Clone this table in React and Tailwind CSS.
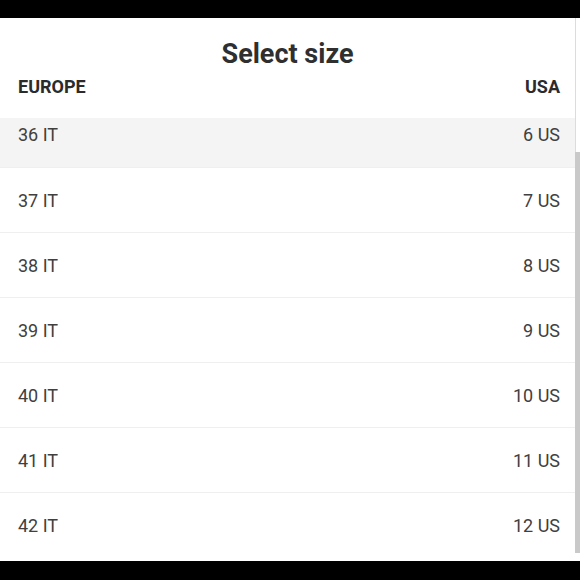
import React from 'react';

const sizes = [
  ['36 IT', '6 US'],
  ['37 IT', '7 US'],
  ['38 IT', '8 US'],
  ['39 IT', '9 US'],
  ['40 IT', '10 US'],
  ['41 IT', '11 US'],
  ['42 IT', '12 US'],
];

export default function App() {
  return (
    <div className="w-[580px] h-[580px] bg-black flex flex-col overflow-hidden font-['Roboto','Liberation_Sans',sans-serif]">
      {/* top bar */}
      <div className="h-[18px] shrink-0" />

      {/* sheet */}
      <div className="h-[543px] shrink-0 bg-white flex">
        <div className="w-[575px] flex flex-col">
          {/* Header */}
          <div className="h-[100px] shrink-0 flex flex-col">
            <h1 className="text-center text-[27px] font-bold text-[#2f2f2f] pt-[19px] leading-[34px]">Select size</h1>
            <div className="flex justify-between pl-[18px] pr-[15px] mt-[3px] text-[18px] font-bold text-[#2b2b2b] leading-[26px]">
              <span>EUROPE</span>
              <span>USA</span>
            </div>
          </div>

          {/* List (scrolled a little) */}
          <div className="flex-1 overflow-hidden">
            <div className="-mt-[16px]">
              {sizes.map(([eu, us], i) => (
                <div
                  key={eu}
                  className={`h-[65px] flex items-center justify-between pl-[18px] pr-[15px] text-[18px] text-[#404040] ${
                    i === 0 ? 'bg-[#f4f4f4]' : 'border-t border-[#efefef]'
                  }`}
                >
                  <span>{eu}</span>
                  <span>{us}</span>
                </div>
              ))}
            </div>
          </div>
        </div>

        {/* scrollbar */}
        <div className="w-[5px] flex flex-col">
          <div className="h-[134px] border-l border-[#dcdcdc]" />
          <div className="h-[401px] bg-[#c9c9c9]" />
        </div>
      </div>
    </div>
  );
}
